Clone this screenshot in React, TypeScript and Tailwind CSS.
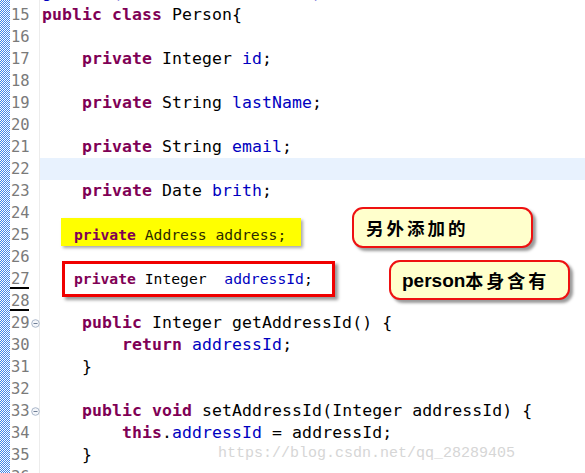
import React from "react";

type Seg = [string, "k" | "f" | "t" | "d"];

const K = (s: string): Seg => [s, "k"];
const F = (s: string): Seg => [s, "f"];
const T = (s: string): Seg => [s, "t"];

const lines: { n: number; segs: Seg[]; fold?: boolean; hl?: boolean; ul?: boolean; small?: boolean }[] = [
  { n: 14, segs: [["g      (                   )", "f"]] },
  { n: 15, segs: [K("public"), T(" "), K("class"), T(" Person{")] },
  { n: 16, segs: [] },
  { n: 17, segs: [T("    "), K("private"), T(" Integer "), F("id"), T(";")] },
  { n: 18, segs: [] },
  { n: 19, segs: [T("    "), K("private"), T(" String "), F("lastName"), T(";")] },
  { n: 20, segs: [] },
  { n: 21, segs: [T("    "), K("private"), T(" String "), F("email"), T(";")] },
  { n: 22, segs: [], hl: true },
  { n: 23, segs: [T("    "), K("private"), T(" Date "), F("brith"), T(";")] },
  { n: 24, segs: [] },
  { n: 25, segs: [K("private"), ["Address address;".padStart(17, " "), "d"]], small: true },
  { n: 26, segs: [] },
  { n: 27, segs: [K("private"), T(" Integer  "), F("addressId"), T(";")], ul: true, small: true },
  { n: 28, segs: [], ul: true },
  { n: 29, segs: [T("    "), K("public"), T(" Integer getAddressId() {")], fold: true },
  { n: 30, segs: [T("        "), K("return"), T(" "), F("addressId"), T(";")] },
  { n: 31, segs: [T("    }")] },
  { n: 32, segs: [] },
  { n: 33, segs: [T("    "), K("public"), T(" "), K("void"), T(" setAddressId(Integer addressId) {")], fold: true },
  { n: 34, segs: [T("        "), K("this"), T("."), F("addressId"), T(" = addressId;")] },
  { n: 35, segs: [T("    }")] },
  { n: 36, segs: [] },
];

const cls: Record<string, string> = {
  k: "text-[#7f0055] font-bold",
  f: "text-[#0000c0]",
  t: "text-black",
  d: "text-[#2a2a00]",
};

function Fold() {
  return (
    <svg width="9" height="9" viewBox="0 0 9 9" className="absolute left-[21px] top-[7px]">
      <circle cx="4.5" cy="4.5" r="3.8" fill="#f4f6fa" stroke="#a9b6c8" strokeWidth="1" />
      <line x1="2.5" y1="4.5" x2="6.5" y2="4.5" stroke="#6f7f96" strokeWidth="1" />
    </svg>
  );
}

export default function App() {
  return (
    <div className="relative w-[585px] h-[473px] overflow-hidden bg-white">
      {/* yellow highlight behind line 25 */}
      <div className="absolute left-[61px] top-[218px] w-[240px] h-[28px] bg-[#ffff00] shadow-[2px_2px_3px_rgba(0,0,0,0.35)]" />

      <div className="relative -mt-[18px]">
        {lines.map((l) => (
          <div key={l.n} className="flex h-[22px]">
            <div className="w-[10px] shrink-0 bg-[repeating-conic-gradient(#3f86e8_0_25%,#ffffff_0_50%)] bg-[length:2px_2px]" />
            <div
              className="relative w-[30px] shrink-0 border-r border-[#ececec] pl-[1px] text-[15.5px] leading-[22px] text-[#7a7a7a]"
              style={{ fontFamily: "'DejaVu Sans Mono', monospace" }}
            >
              {l.n}
              {l.fold && <Fold />}
              {l.ul && <div className="absolute left-0 bottom-[1px] w-[19px] h-[2px] bg-black" />}
            </div>
            <div
              className={`flex-1 whitespace-pre leading-[22px] ${
                l.small ? "pl-[34px] text-[14.7px]" : "pl-[2px] text-[16.5px] tracking-[0.07px]"
              } ${l.hl ? "bg-[#e8f2fe]" : ""}`}
              style={{ fontFamily: "'DejaVu Sans Mono', monospace" }}
            >
              {l.segs.map((s, i) => (
                <span key={i} className={cls[s[1]]}>
                  {s[0]}
                </span>
              ))}
            </div>
          </div>
        ))}
      </div>

      {/* red box around line 27 */}
      <div className="absolute left-[62px] top-[261px] w-[273px] h-[36px] border-[3px] border-[#f00000] shadow-[3px_3px_3px_rgba(0,0,0,0.4)]" />

      {/* callout 1 */}
      <div className="absolute left-[352px] top-[207px] w-[181px] h-[41px] rounded-[11px] border-2 border-[#ee1111] bg-[#ffffcc] shadow-[3px_3px_3px_rgba(0,0,0,0.4)] flex items-center pl-[12px]">
        <span
          className="text-[17.5px] font-bold text-black tracking-[3px] leading-none"
          style={{ fontFamily: "'Noto Sans CJK SC', sans-serif" }}
        >
          另外添加的
        </span>
      </div>

      {/* callout 2 */}
      <div className="absolute left-[389px] top-[260px] w-[181px] h-[40px] rounded-[11px] border-2 border-[#ee1111] bg-[#ffffcc] shadow-[3px_3px_3px_rgba(0,0,0,0.4)] flex items-center pl-[11px]">
        <span className="text-[19px] font-bold text-black leading-none" style={{ fontFamily: "'Liberation Sans', Arial, sans-serif" }}>
          person
        </span>
        <span
          className="text-[18px] font-bold text-black tracking-[3px] leading-none"
          style={{ fontFamily: "'Noto Sans CJK SC', sans-serif" }}
        >
          本身含有
        </span>
      </div>

      {/* watermark */}
      <div
        className="absolute left-[218px] top-[443px] text-[15px] leading-[22px] text-[#d6d6d6] whitespace-pre"
        style={{ fontFamily: "'Liberation Mono', 'Courier New', monospace" }}
      >
        https://blog.csdn.net/qq_28289405
      </div>
    </div>
  );
}
